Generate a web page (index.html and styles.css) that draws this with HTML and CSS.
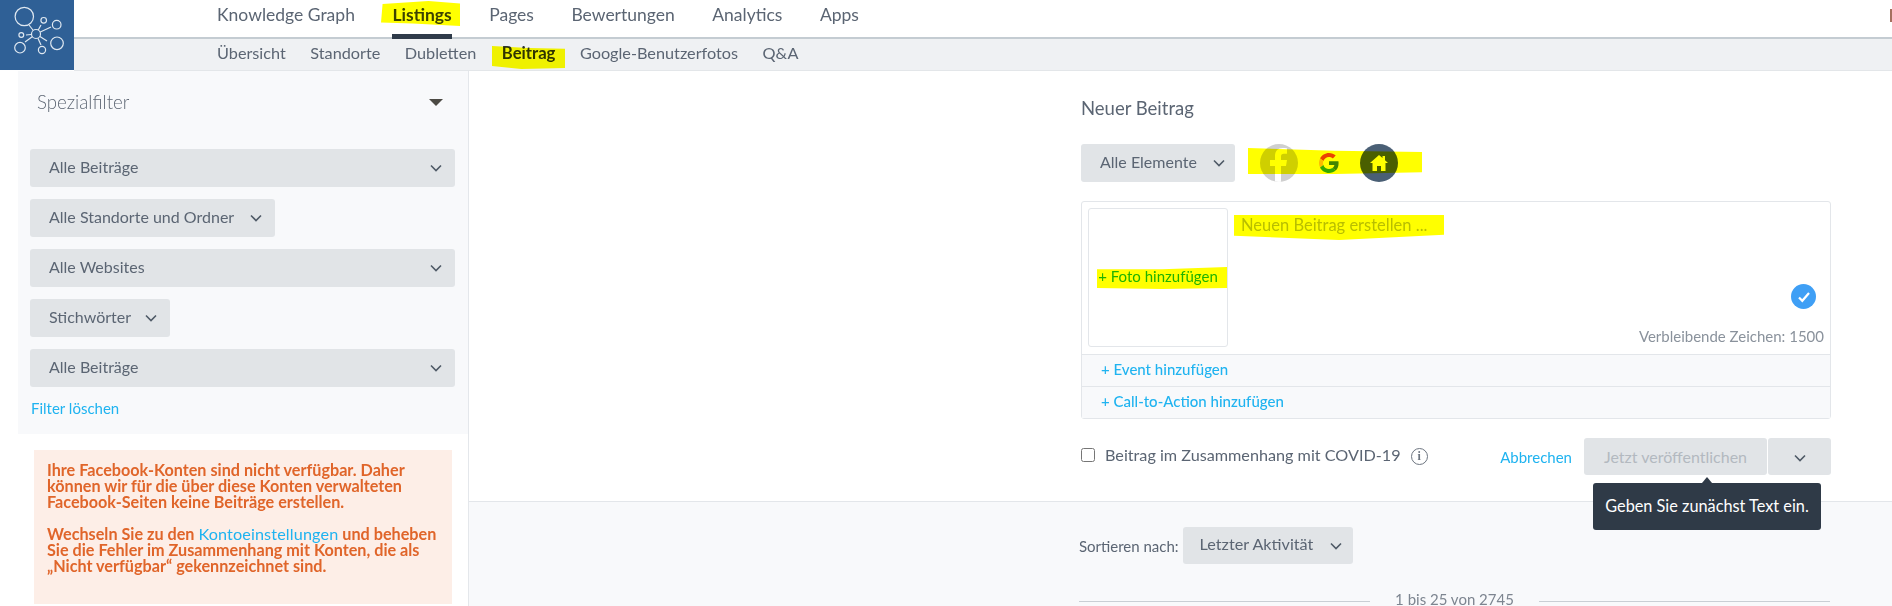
FILE: index.html
```html
<!DOCTYPE html>
<html lang="de">
<head>
<meta charset="utf-8">
<title>Beitrag</title>
<link rel="stylesheet" href="styles.css">
</head>
<body>
<svg class="defs" width="0" height="0" aria-hidden="true">
  <symbol id="chev" viewBox="0 0 12 8"><path d="M1 1.5l5 5 5-5" fill="none" stroke="currentColor" stroke-width="1.6"/></symbol>
</svg>
<header class="top">
  <div class="logo">
    <svg width="74" height="70" viewBox="0 0 74 70" fill="#2f6096" stroke="#dfe8f1" stroke-width="1.2">
      <path d="M36 34L29 25M36 34L41 25M36 34L51 27M36 34L47 41M36 34L41 45M36 34L25 42M36 34L26 35"/>
      <circle cx="36" cy="34" r="4.5"/><circle cx="24.3" cy="16.5" r="9.2"/><circle cx="43.7" cy="20.3" r="2.8"/><circle cx="56.7" cy="24.7" r="4.3"/><circle cx="57" cy="43.3" r="6.3"/><circle cx="42" cy="50" r="3.6"/><circle cx="20" cy="47.7" r="5.3"/><circle cx="21.3" cy="35" r="2.4"/>
    </svg>
  </div>
  <div class="navs">
    <nav class="mainnav">
      <a class="mainlink">Knowledge Graph</a>
      <a class="mainlink active">Listings</a>
      <a class="mainlink">Pages</a>
      <a class="mainlink">Bewertungen</a>
      <a class="mainlink">Analytics</a>
      <a class="mainlink">Apps</a>
      <span class="clipped"></span>
    </nav>
    <nav class="subnav">
      <a>Übersicht</a><a>Standorte</a><a>Dubletten</a><a class="subactive">Beitrag</a><a>Google-Benutzerfotos</a><a>Q&amp;A</a>
    </nav>
  </div>
</header>
<div class="page">
  <aside class="side">
    <section class="panel">
      <div class="panelhead"><span>Spezialfilter</span><i class="tri"></i></div>
      <div class="filters">
        <button class="sel wide"><span>Alle Beiträge</span><svg class="chev"><use href="#chev"/></svg></button>
        <button class="sel"><span>Alle Standorte und Ordner</span><svg class="chev"><use href="#chev"/></svg></button>
        <button class="sel wide"><span>Alle Websites</span><svg class="chev"><use href="#chev"/></svg></button>
        <button class="sel tight"><span>Stichwörter</span><svg class="chev"><use href="#chev"/></svg></button>
        <button class="sel wide"><span>Alle Beiträge</span><svg class="chev"><use href="#chev"/></svg></button>
      </div>
      <a class="link clear">Filter löschen</a>
    </section>
    <section class="warn">
      <p>Ihre Facebook-Konten sind nicht verfügbar. Daher<br>können wir für die über diese Konten verwalteten<br>Facebook-Seiten keine Beiträge erstellen.</p>
      <p>Wechseln Sie zu den <a class="link">Kontoeinstellungen</a> und beheben<br>Sie die Fehler im Zusammenhang mit Konten, die als<br>„Nicht verfügbar“ gekennzeichnet sind.</p>
    </section>
  </aside>
  <main class="main">
    <section class="composer">
      <h1 class="title">Neuer Beitrag</h1>
      <div class="pickrow">
        <button class="sel pick"><span>Alle Elemente</span><svg class="chev"><use href="#chev"/></svg></button>
        <span class="net fb"><svg width="38" height="38" viewBox="0 0 38 38"><path fill="#fff" d="M21 38V22h5l1-6h-6v-3.500c0-1.800.8-2.700 2.800-2.700H27V4.300C26 4.100 24.300 4 22.700 4 18 4 15 6.800 15 12v4h-5v6h5v16z"/></svg></span>
        <span class="net gg"><svg width="20" height="20" viewBox="0 0 48 48"><path fill="#EA4335" d="M24 9.500c3.500 0 6.700 1.200 9.200 3.600l6.900-6.900C35.900 2.400 30.400 0 24 0 14.600 0 6.500 5.400 2.600 13.200l8 6.200C12.400 13.700 17.700 9.500 24 9.500z"/><path fill="#4285F4" d="M47 24.500c0-1.600-.1-3.100-.4-4.500H24v9h12.900c-.6 3-2.200 5.500-4.700 7.200l7.700 6c4.500-4.200 7.100-10.300 7.100-17.700z"/><path fill="#FBBC05" d="M10.500 28.600c-.5-1.400-.8-3-.8-4.600s.3-3.200.8-4.600l-8-6.200C.9 16.400 0 20.100 0 24s.9 7.600 2.600 10.800z"/><path fill="#34A853" d="M24 48c6.500 0 11.900-2.100 15.900-5.800l-7.700-6c-2.200 1.500-4.900 2.300-8.200 2.300-6.300 0-11.600-4.200-13.500-9.900l-8 6.200C6.500 42.600 14.600 48 24 48z"/></svg></span>
        <span class="net home"><svg width="20" height="18" viewBox="0 0 20 18"><path fill="#fff" d="M10 1L1 9h2.500v8H8v-5h4v5h4.500V9H19l-3-2.700V2h-2.500v2.100z"/></svg></span>
        <i class="mark mark-icons"></i>
      </div>
      <div class="box">
        <div class="boxtop">
          <div class="photo"><a class="link">+ Foto hinzufügen</a></div>
          <div class="editor">
            <div class="placeholder">Neuen Beitrag erstellen ...</div>
            <span class="check"><svg width="14" height="12" viewBox="0 0 14 12"><path d="M2 6.500l3.300 3.300L12 2" fill="none" stroke="#fff" stroke-width="2.200"/></svg></span>
            <div class="count">Verbleibende Zeichen: 1500</div>
          </div>
          <i class="mark mark-text"></i>
          <i class="mark mark-foto"></i>
        </div>
        <div class="boxrow"><a class="link">+ Event hinzufügen</a></div>
        <div class="boxrow"><a class="link">+ Call-to-Action hinzufügen</a></div>
      </div>
      <div class="actions">
        <label class="covid"><input type="checkbox">Beitrag im Zusammenhang mit COVID-19</label>
        <span class="info">i</span>
        <a class="link cancel">Abbrechen</a>
        <div class="publish">
          <button class="pub">Jetzt veröffentlichen</button>
          <button class="pubmore"><svg class="chev"><use href="#chev"/></svg></button>
          <div class="tip">Geben Sie zunächst Text ein.</div>
        </div>
      </div>
    </section>
    <section class="list">
      <div class="sort"><span>Sortieren nach:</span><button class="sel"><span>Letzter Aktivität</span><svg class="chev"><use href="#chev"/></svg></button></div>
      <div class="pager"><span>1 bis 25 von 2745</span></div>
    </section>
  </main>
</div>
<i class="mark mark-listings"></i>
<i class="mark mark-beitrag"></i>
</body>
</html>
```
FILE: styles.css
```css
* { box-sizing: border-box; }
html, body { margin: 0; height: 606px; overflow: hidden; background: #fff; }
body { font-family: Lato, "Open Sans", sans-serif; color: #5b6573; font-size: 16px; position: relative; }
.defs { position: absolute; }
a { text-decoration: none; }
.link { color: #1fb3f0; }
button { font-family: inherit; border: 0; cursor: default; }

.top { display: flex; height: 71px; }
.logo { width: 74px; height: 70px; background: #2f6096; flex: none; }
.navs { flex: 1; display: flex; flex-direction: column; min-width: 0; }
.mainnav { height: 39px; display: flex; gap: 37.500px; padding-left: 143px; border-bottom: 2px solid #c4ccd2; background: #fff; font-size: 17.500px; }
.mainlink { height: 39px; padding-top: 4px; line-height: 22px; color: #5b6573; }
.mainlink.active { font-weight: 700; color: #3b4250; border-bottom: 5px solid #2f3b4a; }
.clipped { margin: 9px 0 0 auto; width: 2px; height: 13px; background: #a5705f; }
.subnav { height: 32px; display: flex; gap: 24.500px; padding-left: 143px; background: #eff1f3; border-bottom: 1px solid #e3e6e9; font-size: 16.250px; line-height: 28px; }
.subnav a { color: #5b6573; }
.subnav .subactive { font-weight: 700; color: #2e3440; font-size: 16.700px; margin-left: 1px; }

.page { display: flex; height: 535px; }
.side { width: 469px; flex: none; border-right: 1px solid #e4e7eb; padding-left: 18px; }
.panel { width: 450px; height: 363px; background: #f8f9fb; padding: 19px 13px 0 12px; }
.panelhead { display: flex; justify-content: space-between; align-items: center; height: 24px; padding: 0 12px 0 7px; font-size: 18.700px; font-weight: 300; color: #5f6875; }
.tri { width: 0; height: 0; border-left: 7px solid transparent; border-right: 7px solid transparent; border-top: 7px solid #4c4a44; }
.filters { display: flex; flex-direction: column; align-items: flex-start; gap: 12px; margin-top: 35px; }
.sel { height: 38px; background: #e1e4e7; border-radius: 3px; padding: 0 13px 0 19px; display: inline-flex; align-items: center; justify-content: space-between; gap: 16px; font-size: 16px; color: #5b6573; white-space: nowrap; }
.sel span { position: relative; top: -2px; }
.sel.wide { width: 425px; }
.sel.tight { gap: 14px; }
.chev { width: 12px; height: 8px; color: #4f5a67; flex: none; }
.clear { display: block; margin: 12px 0 0 1px; font-size: 15px; line-height: 18px; }
.warn { width: 418px; height: 154px; margin: 16px 0 0 16px; padding: 12px 13px; background: #fdeee7; color: #e0652a; font-size: 16.200px; font-weight: 700; line-height: 16px; white-space: nowrap; }
.warn p { margin: 0 0 16px; }
.warn .link { font-weight: 400; letter-spacing: .14px; }

.main { flex: 1; min-width: 0; display: flex; flex-direction: column; }
.composer { height: 430px; flex: none; padding: 26px 0 0 612px; }
.title { margin: 0; font-size: 18.500px; font-weight: 400; line-height: 22px; color: #5b6573; }
.pickrow { display: flex; align-items: center; margin-top: 25px; height: 38px; position: relative; }
.pick { margin-right: 25px; width: 154px; }
.net { width: 38px; height: 38px; border-radius: 50%; margin-right: 12px; display: flex; align-items: center; justify-content: center; overflow: hidden; flex: none; }
.fb { background: #cfcfcf; }
.home { background: #4a5f75; }
.box { width: 750px; height: 218px; margin-top: 19px; border: 1px solid #e3e6ea; border-radius: 3px; }
.boxtop { height: 152px; display: flex; padding: 6px 0 0 6px; position: relative; }
.photo { width: 140px; height: 139px; border: 1px solid #e3e6ea; border-radius: 3px; display: flex; align-items: center; justify-content: center; font-size: 15px; padding-bottom: 3px; }
.editor { flex: 1; padding: 0 6px 0 13px; position: relative; }
.placeholder { color: #b8bec6; font-size: 16.500px; line-height: 20px; margin-top: 7px; }
.check { width: 25px; height: 25px; border-radius: 50%; background: #3f9ff5; display: flex; align-items: center; justify-content: center; margin: 49px 8px 0 auto; }
.count { text-align: right; font-size: 15px; line-height: 18px; color: #8a929c; margin-top: 18px; }
.boxrow { height: 32px; border-top: 1px solid #e3e6ea; background: #f8f9fb; padding-left: 19px; font-size: 15px; font-weight: 500; line-height: 29px; }

.actions { display: flex; align-items: center; margin-top: 19px; width: 750px; height: 37px; }
.covid { display: flex; align-items: center; color: #5b6573; font-size: 16.200px; position: relative; top: -2px; }
.covid input { margin: 0 10px 0 0; width: 14px; height: 14px; }
.info { width: 17px; height: 17px; margin-left: 10px; border: 1px solid #6d7580; border-radius: 50%; font: 700 12px/15px "Liberation Serif", serif; text-align: center; color: #6d7580; }
.cancel { margin-left: auto; margin-right: 12px; font-size: 15px; }
.publish { display: flex; gap: 1px; position: relative; }
.pub { width: 183px; height: 37px; border-radius: 3px; background: #e1e4e7; color: #b3b9c0; font-size: 16px; }
.pubmore { width: 63px; height: 37px; border-radius: 3px; background: #e1e4e7; }
.tip { position: absolute; left: 9px; top: 45px; width: 228px; height: 47px; border-radius: 3px; background: #2f3a47; color: #fff; font-size: 16.300px; line-height: 45px; text-align: center; white-space: nowrap; }
.tip::before { content: ""; position: absolute; left: 109px; top: -6px; border-left: 5px solid transparent; border-right: 5px solid transparent; border-bottom: 6px solid #2f3a47; }

.list { flex: 1; background: #f8f9fb; border-top: 1px solid #e3e6ea; padding: 25px 61px 0 610px; }
.sort { display: flex; align-items: center; gap: 4px; font-size: 15px; color: #5b6573; }
.sort .sel { width: 170px; height: 37px; padding: 0 11px 0 17px; font-size: 16.200px; }
.pager { display: flex; align-items: center; gap: 25px; width: 751px; margin-top: 25px; font-size: 15px; line-height: 20px; color: #7d8590; }
.pager::before, .pager::after { content: ""; flex: 1; height: 1px; background: #c9ced4; margin-top: 4px; }

.mark { position: absolute; background: #ffff00; mix-blend-mode: multiply; display: block; pointer-events: none; }
.mark-listings { left: 381px; top: 1px; width: 79px; height: 25px; clip-path: polygon(2% 12%, 60% 0, 100% 10%, 100% 100%, 40% 90%, 0 86%); }
.mark-beitrag { left: 492px; top: 45px; width: 73px; height: 24px; clip-path: polygon(0 4%, 50% 12%, 100% 16%, 100% 96%, 40% 100%, 0 88%); }
.mark-icons { left: 167px; top: 4px; width: 174px; height: 27px; clip-path: polygon(0 0, 50% 10%, 100% 15%, 100% 90%, 50% 96%, 0 96%); }
.mark-text { left: 152px; top: 12px; width: 210px; height: 26px; clip-path: polygon(0 4%, 40% 4%, 100% 4%, 100% 80%, 50% 100%, 0 84%); }
.mark-foto { left: 15px; top: 65px; width: 130px; height: 22px; clip-path: polygon(0 10%, 50% 10%, 100% 0, 100% 96%, 50% 100%, 0 96%); }
```
